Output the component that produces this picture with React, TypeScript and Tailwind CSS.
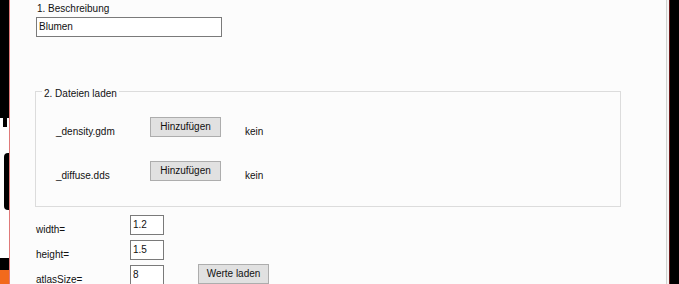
const FONT = { fontFamily: '"Liberation Sans", Arial, sans-serif' }

function WinButton({ label, className = "" }: { label: string; className?: string }) {
  return (
    <button
      className={`h-[20px] w-[71px] border border-[#adadad] bg-[#e1e1e1] text-[10px] leading-[18px] text-[#111] ${className}`}
      style={FONT}
    >
      {label}
    </button>
  )
}

function WinInput({ value, className = "" }: { value: string; className?: string }) {
  return (
    <div
      className={`h-[20px] border border-[#7a7a7a] bg-white pl-[2px] text-[10px] leading-[18px] text-[#111] ${className}`}
    >
      {value}
    </div>
  )
}

// file rows inside the group box
const FILES = ["_density.gdm", "_diffuse.dds"]

// parameter rows below the group box
const PARAMS = [
  { name: "width=", value: "1.2" },
  { name: "height=", value: "1.5" },
  { name: "atlasSize=", value: "8" },
]

export default function App() {
  return (
    <div className="flex h-[284px] w-[679px] overflow-hidden bg-black" style={FONT}>
      {/* window behind, peeking out on the left */}
      <div className="flex w-[9px] flex-col">
        <div className="h-[118px] bg-black" />
        <div className="h-[35px] bg-white">
          <div className="ml-[3px] h-[9px] w-[4px] bg-black" />
        </div>
        <div className="h-[57px] bg-white pl-[4px]">
          <div className="h-full rounded-l-[4px] bg-black" />
        </div>
        <div className="h-[48px] bg-white" />
        <div className="h-[12px] bg-black" />
        <div className="flex-1 bg-[#f26a1c]" />
      </div>
      <div className="w-px bg-[#e07a7a]" />

      {/* form */}
      <div className="flex w-[656px] flex-col bg-[#fcfcfc] text-[10px] leading-[13px] text-[#111]">
        <div className="ml-[27px] mt-[2px]">1. Beschreibung</div>
        <WinInput value="Blumen" className="ml-[26px] mt-[2px] w-[186px]" />

        <fieldset className="ml-[25px] mt-[48px] w-[586px] border border-[#dcdcdc] pb-[25px]">
          <legend className="ml-[6px] px-[2px] leading-[13px]">
            <span className="relative top-[2px]">2. Dateien laden</span>
          </legend>
          {FILES.map((f, i) => (
            <div key={f} className={`flex h-[20px] items-start ${i === 0 ? "mt-[19px]" : "mt-[24px]"}`}>
              <div className="ml-[20px] mt-[8px] w-[94px]">{f}</div>
              <WinButton label="Hinzufügen" />
              <div className="ml-[24px] mt-[8px]">kein</div>
            </div>
          ))}
        </fieldset>

        <div className="mt-[8px] flex flex-col gap-[5px]">
          {PARAMS.map((p, i) => (
            <div key={p.name} className="flex h-[20px] items-start">
              <div className="ml-[26px] mt-[8px] w-[94px]">{p.name}</div>
              <WinInput value={p.value} className="w-[34px]" />
              {i === 2 && <WinButton label="Werte laden" className="-mt-px ml-[34px]" />}
            </div>
          ))}
        </div>
      </div>

      {/* edge of the window on the right */}
      <div className="w-px bg-[#d0d4d0]" />
      <div className="w-[2px] bg-[#f4f4f4]" />
      <div className="w-px bg-[#6b1a1a]" />
      <div className="flex-1 bg-black" />
    </div>
  )
}
